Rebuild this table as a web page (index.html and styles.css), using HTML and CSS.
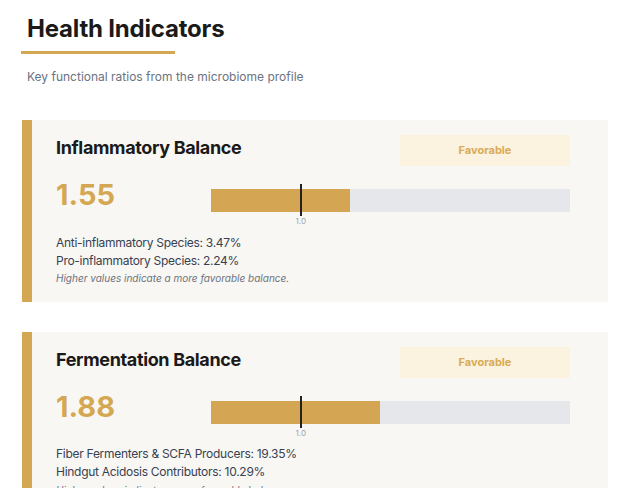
FILE: index.html
```html
<!DOCTYPE html>
<html lang="en">
<head>
<meta charset="utf-8">
<title>Health Indicators</title>
<link rel="stylesheet" href="styles.css">
</head>
<body>
<div class="page">
  <header class="section-head">
    <h1 class="section-title">Health Indicators</h1>
    <div class="title-rule"></div>
    <p class="section-sub">Key functional ratios from the microbiome profile</p>
  </header>

  <section class="card">
    <div class="card-head">
      <h2 class="card-title">Inflammatory Balance</h2>
      <span class="badge">Favorable</span>
    </div>
    <div class="value-row">
      <div class="value">1.55</div>
      <div class="bar-wrap">
        <div class="bar">
          <div class="bar-fill" style="width: 38.75%"></div>
          <div class="marker" style="left: 25%"><span class="marker-label">1.0</span></div>
        </div>
      </div>
    </div>
    <div class="details">
      <p class="detail">Anti-inflammatory Species: 3.47%</p>
      <p class="detail">Pro-inflammatory Species: 2.24%</p>
      <p class="note">Higher values indicate a more favorable balance.</p>
    </div>
  </section>

  <section class="card">
    <div class="card-head">
      <h2 class="card-title">Fermentation Balance</h2>
      <span class="badge">Favorable</span>
    </div>
    <div class="value-row">
      <div class="value">1.88</div>
      <div class="bar-wrap">
        <div class="bar">
          <div class="bar-fill" style="width: 47%"></div>
          <div class="marker" style="left: 25%"><span class="marker-label">1.0</span></div>
        </div>
      </div>
    </div>
    <div class="details">
      <p class="detail">Fiber Fermenters &amp; SCFA Producers: 19.35%</p>
      <p class="detail">Hindgut Acidosis Contributors: 10.29%</p>
      <p class="note">Higher values indicate a more favorable balance.</p>
    </div>
  </section>
</div>
</body>
</html>
```

FILE: styles.css
```css
* { box-sizing: border-box; }
html, body { margin: 0; padding: 0; background: #ffffff; }
body {
  font-family: Inter, "Noto Sans", "Liberation Sans", sans-serif;
  color: #1a1a1a;
}
.page {
  padding: 13.5px 16px 0 22px;
}
.section-head {
  padding-left: 5px;
}
.section-title {
  margin: 0;
  font-size: 24px;
  line-height: 29px;
  font-weight: 700;
  color: #1a1a1a;
  letter-spacing: -0.2px;
}
.title-rule {
  width: 154px;
  height: 3px;
  margin: 8.5px 0 0 -6px;
  background: #d4a853;
}
.section-sub {
  margin: 14.6px 0 0;
  font-size: 12px;
  line-height: 15.7px;
  color: #6b7280;
}
.card {
  margin-top: 35.7px;
  background: #f9f7f3;
  border-left: 10px solid #d4a853;
  padding: 15px 38px 15.3px 24px;
}
.card + .card { margin-top: 30px; }
.card-head {
  display: flex;
  justify-content: space-between;
  align-items: flex-start;
}
.card-title {
  margin: 2px 0 0;
  font-size: 18px;
  line-height: 22px;
  font-weight: 700;
  letter-spacing: -0.35px;
  color: #1a1a1a;
}
.badge {
  width: 170px;
  height: 31px;
  display: flex;
  align-items: center;
  justify-content: center;
  background: #fbf2df;
  color: #d9ab55;
  font-size: 11px;
  font-weight: 700;
}
.value-row {
  display: flex;
  align-items: flex-start;
  margin-top: 11px;
}
.value {
  width: 155px;
  flex: none;
  font-size: 29px;
  line-height: 35px;
  font-weight: 700;
  color: #d4a853;
}
.bar-wrap {
  flex: 1;
  padding-top: 12px;
}
.bar {
  position: relative;
  height: 23px;
  background: #e5e7eb;
}
.bar-fill {
  height: 100%;
  background: #d4a653;
}
.marker {
  position: absolute;
  top: -5px;
  bottom: -4px;
  width: 2px;
  margin-left: -1px;
  background: #222222;
}
.marker-label {
  position: absolute;
  top: 32px;
  left: 50%;
  transform: translateX(-50%);
  font-size: 8px;
  line-height: 10px;
  color: #9ca3af;
}
.details {
  margin-top: 21.6px;
}
.detail {
  margin: 0;
  font-size: 12px;
  line-height: 18.2px;
  letter-spacing: -0.28px;
  color: #374151;
}
.note {
  margin: 1px 0 0;
  font-size: 10px;
  line-height: 15.4px;
  font-style: italic;
  color: #6b7280;
}
```
